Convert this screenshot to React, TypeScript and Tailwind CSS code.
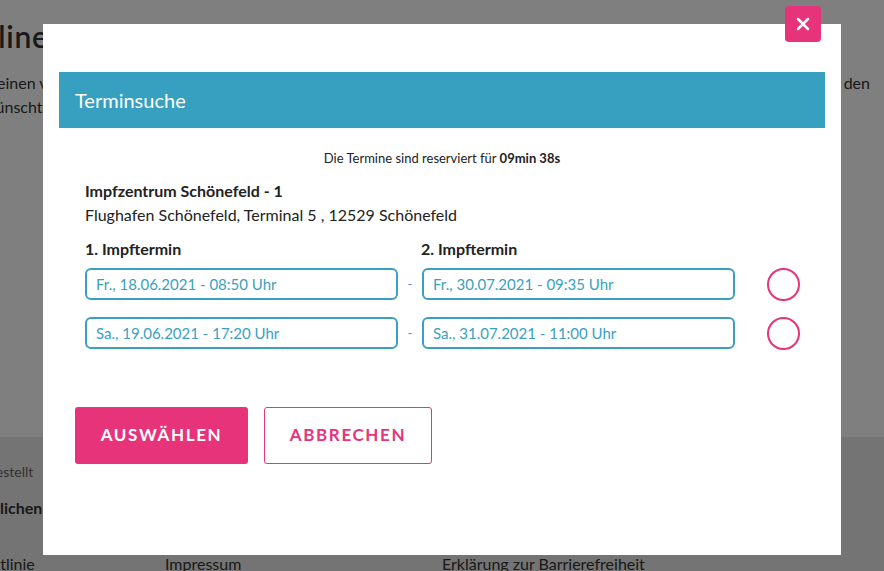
import { X } from "lucide-react";

const font = { fontFamily: "Lato, 'Noto Sans', sans-serif" };

function DateBox({ text }: { text: string }) {
  return (
    <div className="flex h-[32px] w-[313px] items-center rounded-[6px] border-2 border-[#3a9fc1] px-[9px] text-[15px] text-[#3a9fc1]">
      {text}
    </div>
  );
}

function Row({ a, b }: { a: string; b: string }) {
  return (
    <div className="flex items-center">
      <DateBox text={a} />
      <span className="w-[24px] text-center text-[13px] leading-none text-[#3a9fc1]">-</span>
      <DateBox text={b} />
      <span className="ml-[32px] h-[33px] w-[33px] rounded-full border-2 border-[#e6337a]" />
    </div>
  );
}

export default function App() {
  return (
    <div className="relative h-[571px] w-[884px] overflow-hidden bg-white text-[#333]" style={font}>
      {/* Seite dahinter */}
      <div className="flex h-[437px] flex-col">
        <h1 className="ml-[-44px] mt-[14px] whitespace-nowrap text-[30px] font-semibold tracking-wide">
          Onlinebuchung für Ihre Corona-Schutzimpfung
        </h1>
        <div className="ml-[-3px] mt-[12px] flex justify-between pr-[14px] text-[16px] leading-[24px]">
          <p>einen verbindlichen Termin</p>
          <p>den</p>
        </div>
        <p className="ml-[-17px] text-[16px] leading-[24px]">wünschten Termin aus</p>
      </div>
      <div className="h-[134px] bg-[#e9e9e9]">
        <p className="ml-[-12px] pt-[24px] text-[14px] text-[#666]">bestellt</p>
        <p className="ml-[-47px] mt-[14px] text-[16px] font-bold">Öffentlichen</p>
        <div className="mt-[32px] flex text-[16px]">
          <span className="ml-[-30px] w-[195px]">Richtlinie</span>
          <span className="w-[277px]">Impressum</span>
          <span>Erklärung zur Barrierefreiheit</span>
        </div>
      </div>

      {/* Overlay */}
      <div className="absolute inset-0 bg-black/50" />

      {/* Modal */}
      <div className="absolute left-[43px] top-[24px] h-[531px] w-[798px] bg-white pt-[48px]">
        <button className="absolute left-[742px] top-[-18px] flex h-[36px] w-[36px] items-center justify-center rounded-[4px] bg-[#e6337a] text-white">
          <X size={20} strokeWidth={3} />
        </button>

        <div className="mx-[16px] flex h-[56px] items-center bg-[#379fc0] px-[16px] text-[20px] text-white">
          Terminsuche
        </div>

        <p className="mt-[21px] text-center text-[13px] text-[#222]">
          Die Termine sind reserviert für <b>09min 38s</b>
        </p>

        <div className="ml-[42px] mt-[10px] text-[16px] text-[#222]">
          <p className="font-bold leading-[24px]">Impfzentrum Schönefeld - 1</p>
          <p className="leading-[24px]">Flughafen Schönefeld, Terminal 5 , 12529 Schönefeld</p>

          <div className="mt-[10px] flex font-bold leading-[24px]">
            <span className="w-[336px]">1. Impftermin</span>
            <span>2. Impftermin</span>
          </div>

          <div className="mt-[7px] flex flex-col gap-[16px]">
            <Row a="Fr., 18.06.2021 - 08:50 Uhr" b="Fr., 30.07.2021 - 09:35 Uhr" />
            <Row a="Sa., 19.06.2021 - 17:20 Uhr" b="Sa., 31.07.2021 - 11:00 Uhr" />
          </div>
        </div>

        <div className="ml-[32px] mt-[57px] flex gap-[16px]">
          <button className="h-[57px] w-[173px] rounded-[3px] bg-[#e6337a] text-[17px] font-bold tracking-[1.6px] text-white">
            AUSWÄHLEN
          </button>
          <button className="h-[57px] w-[168px] rounded-[3px] border border-[#e6337a] bg-white text-[17px] font-bold tracking-[1.6px] text-[#e6337a]">
            ABBRECHEN
          </button>
        </div>
      </div>
    </div>
  );
}
